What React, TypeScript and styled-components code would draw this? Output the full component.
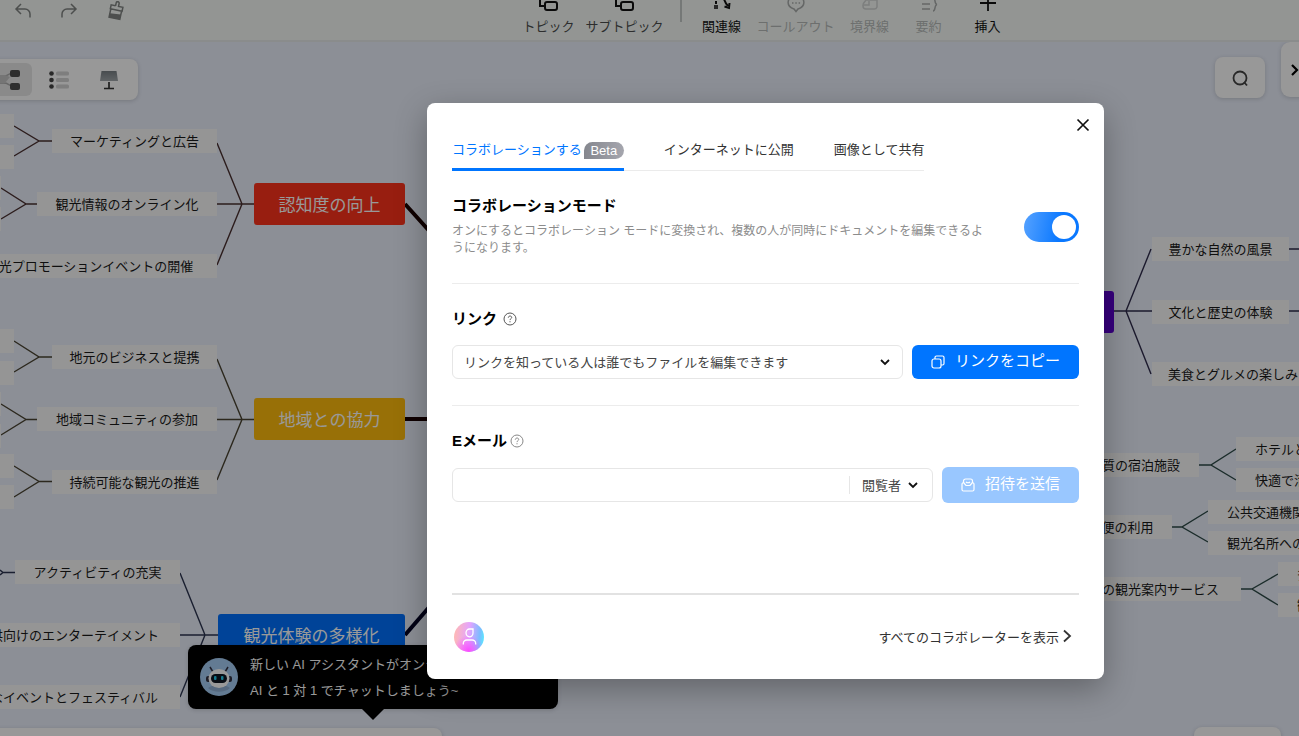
import React from "react";
import styled, { createGlobalStyle, css } from "styled-components";

const GlobalStyle = createGlobalStyle`
  * { box-sizing: border-box; }
  html, body, #root { height: 100%; }
  body {
    margin: 0;
    overflow: hidden;
    font-family: "Liberation Sans", "Noto Sans CJK JP", sans-serif;
    font-size: 13px;
    color: #1a1a1a;
  }
  button, input, select { font: inherit; color: inherit; margin: 0; }
  button { border: 0; padding: 0; background: none; cursor: pointer; }
`;

const Page = styled.div`
  position: relative;
  display: flex;
  flex-direction: column;
  height: 100%;
  min-height: 736px;
  overflow: hidden;
  background: #e9eefa;
`;

/* ---------- top toolbar ---------- */

const Header = styled.header`
  position: relative;
  z-index: 1;
  display: flex;
  align-items: flex-end;
  height: 42px;
  background: #f5f9f6;
  border-bottom: 2px solid #e6e9ea;
  overflow: hidden;
`;

const History = styled.div`
  display: flex;
  align-self: flex-start;
  gap: 26px;
  padding: 1px 0 0 13px;
`;

const IconButton = styled.button`
  display: flex;
  width: 20px;
  height: 20px;
  color: #808482;
`;

const Tools = styled.div`
  flex: 1;
  display: flex;
  justify-content: center;
  align-items: flex-end;
  gap: 11px;
  padding: 0 0 4px 110px;
`;

const Tool = styled.button<{ $tone?: "soft" | "off" }>`
  display: flex;
  flex-direction: column;
  align-items: center;
  gap: 2px;
  min-width: 48px;
  line-height: 18px;
  white-space: nowrap;
  color: ${(p) => (p.$tone === "off" ? "#b6b9b8" : p.$tone === "soft" ? "#4c4e4d" : "#111")};
  svg { color: ${(p) => (p.$tone === "off" ? "#a9acab" : "#111")}; }
`;

const ToolDivider = styled.span`
  width: 2px;
  height: 22px;
  margin: 0 5px 14px;
  background: #c4c8c6;
`;

/* ---------- mind map ---------- */

const Board = styled.main`
  position: absolute;
  inset: 0;
  overflow: hidden;
`;

const Wires = styled.svg`
  position: absolute;
  left: 0;
  top: 0;
  width: 1299px;
  height: 736px;
  fill: none;
`;

const Node = styled.div<{ $x: number; $y: number; $w: number; $start?: boolean }>`
  position: absolute;
  left: ${(p) => p.$x}px;
  top: ${(p) => p.$y}px;
  width: ${(p) => p.$w}px;
  height: 24px;
  line-height: 26px;
  white-space: nowrap;
  overflow: hidden;
  text-align: center;
  background: #f9f9f9;
  ${(p) => p.$start && css`text-align: left; padding-left: 19px;`}
`;

const Topic = styled(Node)<{ $color: string }>`
  height: 42px;
  line-height: 45px;
  border-radius: 3px;
  font-size: 17px;
  color: #fff;
  background: ${(p) => p.$color};
`;

/* ---------- panels floating over the map ---------- */

const panel = css`
  position: absolute;
  display: flex;
  align-items: center;
  background: #fdfdfd;
  box-shadow: 0 1px 4px rgba(0, 0, 0, 0.16);
`;

const ViewSwitch = styled.nav`
  ${panel}
  left: -20px;
  top: 59px;
  height: 41px;
  padding: 4px 6px;
  gap: 4px;
  border-radius: 8px;
`;

const ViewButton = styled.button<{ $active?: boolean }>`
  display: flex;
  align-items: center;
  justify-content: center;
  width: 46px;
  height: 33px;
  border-radius: 6px;
  background: ${(p) => (p.$active ? "#e6e6e6" : "transparent")};
`;

const SearchButton = styled.button`
  ${panel}
  right: 34px;
  top: 57px;
  width: 50px;
  height: 41px;
  justify-content: center;
  border-radius: 8px;
`;

const SideToggle = styled.button`
  ${panel}
  right: -10px;
  top: 42px;
  width: 28px;
  height: 55px;
  padding-left: 9px;
  border-radius: 9px;
`;

const StatusBar = styled.div`
  ${panel}
  left: -10px;
  top: 728px;
  width: 452px;
  height: 40px;
  border-radius: 8px;
`;

const ZoomBar = styled.div`
  ${panel}
  right: 18px;
  top: 727px;
  width: 87px;
  height: 40px;
  border-radius: 8px;
`;

const Hint = styled.aside`
  ${panel}
  left: 188px;
  top: 645px;
  width: 370px;
  height: 64px;
  gap: 12px;
  padding: 0 12px;
  border-radius: 8px;
  background: #000;
  color: #fff;
  line-height: 26px;
  white-space: nowrap;
  p { margin: 0; }
  &::after {
    content: "";
    position: absolute;
    left: 173px;
    top: 63px;
    border: 12px solid transparent;
    border-bottom-width: 0;
    border-top-color: #000;
  }
`;

const HintText = styled.div`
  padding-top: 2px;
`;

/* ---------- dialog ---------- */

const Backdrop = styled.div`
  position: absolute;
  inset: 0;
  z-index: 2;
  display: flex;
  justify-content: center;
  align-items: flex-start;
  padding: 103px 0 0 232px;
  background: rgba(0, 0, 0, 0.4);
`;

const Dialog = styled.section`
  position: relative;
  flex: 0 1 677px;
  padding: 37px 25px 27px;
  border-radius: 8px;
  background: #fff;
  box-shadow: 0 10px 32px rgba(0, 0, 0, 0.3);
`;

const Close = styled.button`
  position: absolute;
  top: 14px;
  right: 13px;
  display: flex;
  width: 16px;
  height: 16px;
`;

const Tabs = styled.div`
  display: inline-flex;
  gap: 40px;
  border-bottom: 1px solid #ebebeb;
  vertical-align: top;
`;

const Tab = styled.button<{ $active?: boolean }>`
  display: flex;
  align-items: center;
  gap: 2px;
  height: 31px;
  margin-bottom: -1px;
  padding-bottom: 8px;
  line-height: 20px;
  white-space: nowrap;
  border-bottom: 3px solid ${(p) => (p.$active ? "#0075ff" : "transparent")};
  color: ${(p) => (p.$active ? "#0075ff" : "#333")};
`;

const Badge = styled.span`
  width: 40px;
  height: 17px;
  line-height: 17px;
  text-align: center;
  border-radius: 9px 9px 9px 0;
  background: linear-gradient(90deg, #85878e, #a5a6ae);
  color: #fff;
`;

const Row = styled.div<{ $top?: number; $gap?: number; $align?: string }>`
  display: flex;
  align-items: ${(p) => p.$align ?? "center"};
  gap: ${(p) => p.$gap ?? 0}px;
  margin-top: ${(p) => p.$top ?? 0}px;
`;

const Heading = styled.h2`
  margin: 0;
  font-size: 15px;
  line-height: 20px;
  font-weight: 700;
  color: #000;
`;

const Grow = styled.div`
  flex: 1;
  min-width: 0;
`;

const Description = styled.p`
  margin: 7px 0 0;
  font-size: 12px;
  line-height: 17px;
  color: #8c8c8c;
`;

const Rule = styled.hr<{ $top: number; $strong?: boolean }>`
  height: ${(p) => (p.$strong ? 2 : 1)}px;
  margin: ${(p) => p.$top}px 0 0;
  border: 0;
  background: ${(p) => (p.$strong ? "#e2e2e2" : "#ececec")};
`;

const Switch = styled.input`
  appearance: none;
  flex: none;
  width: 55px;
  height: 30px;
  margin: 16px 0 0;
  padding: 3px;
  border-radius: 15px;
  background: linear-gradient(100deg, #56a2ff, #0a78ff 65%);
  &::after {
    content: "";
    display: block;
    width: 24px;
    height: 24px;
    margin-left: auto;
    border-radius: 50%;
    background: #fff;
  }
`;

const Field = styled.div`
  position: relative;
  flex: 1;
  min-width: 0;
  display: flex;
  align-items: center;
  height: 34px;
  border: 1px solid #e6e6e6;
  border-radius: 6px;
  background: #fff;
`;

const Select = styled.select`
  appearance: none;
  width: 100%;
  height: 32px;
  padding: 0 36px 0 11px;
  border: 0;
  background: transparent;
  color: #444;
`;

const RoleSelect = styled(Select)`
  width: 83px;
  height: 18px;
  padding: 0 0 0 12px;
  border-left: 1px solid #e6e6e6;
`;

const Chevron = styled.svg<{ $right: number }>`
  position: absolute;
  right: ${(p) => p.$right}px;
  width: 10px;
  height: 8px;
  pointer-events: none;
  fill: none;
  stroke: #111;
  stroke-width: 1.8;
`;

const EmailInput = styled.input`
  flex: 1;
  min-width: 0;
  height: 32px;
  padding: 0 11px;
  border: 0;
  outline: 0;
  background: transparent;
`;

const Action = styled.button<{ $width: number }>`
  display: flex;
  align-items: center;
  justify-content: center;
  gap: 10px;
  width: ${(p) => p.$width}px;
  height: 34px;
  border-radius: 6px;
  background: #0075ff;
  color: #fff;
  font-size: 15px;
  line-height: 20px;
  white-space: nowrap;
  span { padding-bottom: 2px; }
  &:disabled {
    height: 36px;
    background: #99c7ff;
  }
`;

const Footer = styled.footer`
  display: flex;
  align-items: center;
  justify-content: space-between;
  padding: 27px 7px 0 2px;
`;

const AllLink = styled.a`
  display: flex;
  align-items: center;
  gap: 3px;
  padding-bottom: 2px;
  color: #333;
  text-decoration: none;
`;

/* ---------- drawings ---------- */

const TopicIcon = () => (
  <svg width="20" height="20" viewBox="0 0 20 20" fill="none" stroke="currentColor" strokeWidth="2">
    <path d="M2 3v7h5" />
    <rect x="7" y="6" width="12" height="8" rx="2" />
  </svg>
);

const Help = ({ light }: { light?: boolean }) => (
  <svg width="14" height="14" viewBox="0 0 14 14" fill="none" stroke={light ? "#888" : "#555"} strokeWidth="1">
    <circle cx="7" cy="7" r="6" />
    <path d="M5.3 5.7c0-2.2 3.4-2.2 3.4-.2 0 1.2-1.7 1.2-1.7 2.6M7 9.2v1.1" />
  </svg>
);

const Robot = () => (
  <svg width="38" height="38" viewBox="0 0 38 38">
    <circle cx="19" cy="19" r="19" fill="#a6cdf5" />
    <path d="M13 14l-3-5M25 14l3-5" stroke="#334" strokeWidth="1.5" />
    <path d="M8 30c4-4 18-4 22 0-5 5-17 5-22 0z" fill="#8fb0d4" />
    <rect x="6" y="18" width="26" height="6" rx="2" fill="#334" />
    <ellipse cx="19" cy="20.500" rx="10.500" ry="9.500" fill="#fff" />
    <rect x="11" y="16" width="16" height="9" rx="4.500" fill="#0d1520" />
    <rect x="14" y="18" width="2.500" height="4" rx="1" fill="#25c9e8" />
    <rect x="21" y="18" width="2.500" height="4" rx="1" fill="#25c9e8" />
  </svg>
);

const Avatar = () => (
  <svg width="30" height="30" viewBox="0 0 30 30" fill="none">
    <defs>
      <linearGradient id="avatarBase" x1="0" y1="0.400" x2="1" y2="0.500">
        <stop offset="0" stopColor="#ffb9b4" />
        <stop offset="0.500" stopColor="#e3a3ff" />
        <stop offset="0.850" stopColor="#7cbcff" />
        <stop offset="1" stopColor="#5be6ff" />
      </linearGradient>
      <radialGradient id="avatarGlow" cx="0.480" cy="0.950" r="0.500">
        <stop offset="0" stopColor="#fb4dff" />
        <stop offset="1" stopColor="#fb4dff" stopOpacity="0" />
      </radialGradient>
    </defs>
    <circle cx="15" cy="15" r="15" fill="url(#avatarBase)" />
    <circle cx="15" cy="15" r="15" fill="url(#avatarGlow)" />
    <path d="M19 7v4a3.500 3.900 0 1 1-3.500-4zM9.300 22.500v-1a3.500 3.500 0 0 1 3.500-3.500h5.400a3.500 3.500 0 0 1 3.500 3.500v1" stroke="#fff" strokeWidth="1.300" />
  </svg>
);

/* ---------- data ---------- */

const blanks = [
  [114, 14], [145, 14], [176, 1], [207, 1],
  [329, 14], [361, 14], [392, 1], [424, 1], [454, 14], [485, 14],
];

const nodes: { x: number; y: number; w: number; text: string; start?: boolean }[] = [
  { x: 52, y: 129, w: 165, text: "マーケティングと広告" },
  { x: 37, y: 192, w: 180, text: "観光情報のオンライン化" },
  { x: -38, y: 254, w: 255, text: "観光プロモーションイベントの開催" },
  { x: 52, y: 345, w: 165, text: "地元のビジネスと提携" },
  { x: 37, y: 407, w: 180, text: "地域コミュニティの参加" },
  { x: 52, y: 470, w: 165, text: "持続可能な観光の推進" },
  { x: 15, y: 560, w: 165, text: "アクティビティの充実" },
  { x: -44, y: 623, w: 224, text: "子供向けのエンターテイメント" },
  { x: -58, y: 685, w: 238, text: "特別なイベントとフェスティバル" },
  { x: 1152, y: 237, w: 137, text: "豊かな自然の風景" },
  { x: 1152, y: 300, w: 137, text: "文化と歴史の体験" },
  { x: 1152, y: 362, w: 162, text: "美食とグルメの楽しみ" },
  { x: 1070, y: 453, w: 129, text: "上質の宿泊施設" },
  { x: 1044, y: 515, w: 128, text: "交通の便の利用" },
  { x: 1054, y: 577, w: 187, text: "日本の観光案内サービス" },
  { x: 1236, y: 437, w: 160, text: "ホテルと旅館", start: true },
  { x: 1236, y: 468, w: 160, text: "快適で清潔な客室", start: true },
  { x: 1208, y: 500, w: 160, text: "公共交通機関の利用", start: true },
  { x: 1208, y: 531, w: 160, text: "観光名所へのアクセス", start: true },
  { x: 1278, y: 562, w: 160, text: "多言語対応", start: true },
  { x: 1278, y: 593, w: 160, text: "観光案内所", start: true },
];

const wires: [string, string][] = [
  ["#4a3030", "M14 126L39 141L14 156M39 141H52M1 188L26 204L1 219M26 204H37M217 143L242 204L217 265M217 204H254"],
  ["#4a4432", "M14 341L39 357L14 372M39 357H52M1 404L26 419.500L1 435M26 419.500H37M14 466L39 481.500L14 497M39 481.500H52M217 359L242 419.500L217 480M217 419.500H254"],
  ["#2c3450", "M0 570L3 572.500L0 575M3 572.500H15M180 573L205 635L180 697M180 635H218"],
  ["#2f2c4c", "M1114 311H1152M1151 249L1126 311L1151 374M1289 249H1299M1289 311H1299"],
  ["#2d4a47", "M1199 465H1211M1236 449L1211 465L1236 480M1172 527H1182M1208 511L1182 527L1208 542M1241 589H1252M1278 574L1252 589L1278 605"],
];

export default function App() {
  return (
    <Page>
      <GlobalStyle />
      <Header>
        <History>
          <IconButton aria-label="元に戻す">
            <svg width="20" height="20" viewBox="0 0 20 20" fill="none" stroke="currentColor" strokeWidth="1.500">
              <path d="M8 3L3 8l5 5M3 8h9a5 5 0 0 1 5 5v3.500" />
            </svg>
          </IconButton>
          <IconButton aria-label="やり直し">
            <svg width="20" height="20" viewBox="0 0 20 20" fill="none" stroke="currentColor" strokeWidth="1.500">
              <path d="M12 3l5 5-5 5M17 8H8a5 5 0 0 0-5 5v3.500" />
            </svg>
          </IconButton>
          <IconButton aria-label="書式のコピー">
            <svg width="20" height="20" viewBox="0 0 20 20" fill="none" stroke="currentColor" strokeWidth="1.500">
              <g transform="rotate(12 11 10)">
                <path d="M9.500 5V2a1.500 1.500 0 0 1 3 0v3H17v4H5V5h4.500M5.500 9v8.500h11V9" />
                <path d="M5.500 13.500l11-1v5h-11z" fill="currentColor" stroke="none" />
              </g>
            </svg>
          </IconButton>
        </History>
        <Tools>
          <Tool $tone="soft"><TopicIcon />トピック</Tool>
          <Tool $tone="soft"><TopicIcon />サブトピック</Tool>
          <ToolDivider />
          <Tool>
            <svg width="20" height="20" viewBox="0 0 20 20" fill="none" stroke="currentColor" strokeWidth="2">
              <path d="M4 5v3M12 3c1 3 2 5 4 7M12.500 10.500l4.500 1.500.5-5" />
              <rect x="2" y="9" width="4" height="4" fill="#444" stroke="none" />
            </svg>
            関連線
          </Tool>
          <Tool $tone="off">
            <svg width="20" height="20" viewBox="0 0 20 20" fill="none" stroke="currentColor" strokeWidth="1.500">
              <path d="M10 15.500l-2-2.500C-1 10 1 0 10 0s11 10 2 13z" />
              <path d="M6 7h1.500M9.300 7h1.500M12.600 7h1.500" />
            </svg>
            コールアウト
          </Tool>
          <Tool $tone="off">
            <svg width="20" height="20" viewBox="0 0 20 20" fill="none" stroke="#d0d3d2" strokeWidth="1.500">
              <path d="M3 8l3-4h11v7a3 3 0 0 1-3 2H6a3 3 0 0 1-3-3V9h6V5" />
            </svg>
            境界線
          </Tool>
          <Tool $tone="off">
            <svg width="20" height="20" viewBox="0 0 20 20" fill="none" stroke="currentColor" strokeWidth="1.500">
              <path d="M3 8h8M3 13h8M14 2c3 0 1 6 4 6.500-3 .5-1 6.500-4 6.500" />
            </svg>
            要約
          </Tool>
          <Tool>
            <svg width="20" height="20" viewBox="0 0 20 20" fill="none" stroke="currentColor" strokeWidth="1.800">
              <path d="M2 7h16M10 0v15" />
            </svg>
            挿入
          </Tool>
        </Tools>
      </Header>

      <Board>
        <Wires viewBox="0 0 1299 736">
          {wires.map(([color, d]) => (
            <path key={color} d={d} stroke={color} strokeWidth="1.400" />
          ))}
          <path d="M405 204L450 254M405 419H450" stroke="#1a0000" strokeWidth="4" />
          <path d="M405 635L450 583" stroke="#000022" strokeWidth="4" />
        </Wires>
        {blanks.map(([y, w]) => (
          <Node key={y} $x={0} $y={y} $w={w} />
        ))}
        {nodes.map((n) => (
          <Node key={n.text} $x={n.x} $y={n.y} $w={n.w} $start={n.start}>{n.text}</Node>
        ))}
        <Topic $x={254} $y={183} $w={151} $color="#fd321b">認知度の向上</Topic>
        <Topic $x={254} $y={398} $w={151} $color="#fdbb0d">地域との協力</Topic>
        <Topic $x={218} $y={614} $w={187} $color="#0071fd">観光体験の多様化</Topic>
        <Topic $x={954} $y={291} $w={160} $color="#5c00d2">観光資源</Topic>

        <ViewSwitch aria-label="表示">
          <ViewButton $active aria-label="マインドマップ">
            <svg width="46" height="20" viewBox="0 0 46 20">
              <path d="M4 6h14c4 0 4-2 8-3M4 13h14c4 0 4 2 8 3" stroke="#aaa" strokeWidth="1.500" fill="none" />
              <path d="M2 5h17l5 2-5 6H2z" fill="#c4c4c4" />
              <rect x="24" y="0" width="10" height="7" rx="2" fill="#4d4d4d" />
              <rect x="24" y="13" width="10" height="7" rx="2" fill="#4d4d4d" />
            </svg>
          </ViewButton>
          <ViewButton aria-label="アウトライン">
            <svg width="20" height="18" viewBox="0 0 20 18">
              <g fill="#444"><circle cx="2.500" cy="2.500" r="2.300" /><circle cx="2.500" cy="9" r="2.300" /><circle cx="2.500" cy="15.500" r="2.300" /></g>
              <g fill="#d2d2d2"><rect x="7" y="0.500" width="13" height="4" rx="1.500" /><rect x="7" y="7" width="13" height="4" rx="1.500" /><rect x="7" y="13.500" width="13" height="4" rx="1.500" /></g>
            </svg>
          </ViewButton>
          <ViewButton aria-label="スライド">
            <svg width="20" height="20" viewBox="0 0 20 20">
              <defs>
                <linearGradient id="board" x1="0" y1="0" x2="0" y2="1">
                  <stop offset="0" stopColor="#787f84" /><stop offset="1" stopColor="#a0a6aa" />
                </linearGradient>
              </defs>
              <path d="M2.500 1h15l1.500 10H1z" fill="url(#board)" />
              <path d="M10 12v6M5 18.500h10" stroke="#333" strokeWidth="1.700" />
            </svg>
          </ViewButton>
        </ViewSwitch>

        <SearchButton aria-label="検索">
          <svg width="18" height="18" viewBox="0 0 18 18" fill="none" stroke="#444" strokeWidth="1.800">
            <circle cx="9" cy="9" r="6.500" /><path d="M13 13l3 3.500" />
          </svg>
        </SearchButton>
        <SideToggle aria-label="パネルを開く">
          <svg width="10" height="12" viewBox="0 0 10 12" fill="none" stroke="#000" strokeWidth="2.200">
            <path d="M2 1l5 5-5 5" />
          </svg>
        </SideToggle>
        <StatusBar />
        <ZoomBar />
        <Hint>
          <Robot />
          <HintText>
            <p>新しい AI アシスタントがオンライン</p>
            <p>AI と 1 対 1 でチャットしましょう~</p>
          </HintText>
        </Hint>
      </Board>

      <Backdrop>
        <Dialog role="dialog" aria-modal="true" aria-label="共有">
          <Close aria-label="閉じる">
            <svg width="16" height="16" viewBox="0 0 16 16" stroke="#111" strokeWidth="1.700">
              <path d="M2.500 2.500l11 11M13.500 2.500l-11 11" />
            </svg>
          </Close>

          <Tabs role="tablist">
            <Tab role="tab" aria-selected="true" $active>コラボレーションする<Badge>Beta</Badge></Tab>
            <Tab role="tab" aria-selected="false">インターネットに公開</Tab>
            <Tab role="tab" aria-selected="false">画像として共有</Tab>
          </Tabs>

          <Row $top={25} $align="flex-start">
            <Grow>
              <Heading as="label" htmlFor="collab-mode">コラボレーションモード</Heading>
              <Description>
                オンにするとコラボレーション モードに変換され、複数の人が同時にドキュメントを編集できるよ
                <br />
                うになります。
              </Description>
            </Grow>
            <Switch id="collab-mode" type="checkbox" role="switch" defaultChecked />
          </Row>

          <Rule $top={26} />

          <Row $top={25} $gap={6}>
            <Heading as="label" htmlFor="link-scope">リンク</Heading>
            <Help />
          </Row>
          <Row $top={16} $gap={9}>
            <Field>
              <Select id="link-scope">
                <option>リンクを知っている人は誰でもファイルを編集できます</option>
              </Select>
              <Chevron $right={12} viewBox="0 0 10 8"><path d="M1 2l4 4 4-4" /></Chevron>
            </Field>
            <Action $width={167}>
              <svg width="14" height="14" viewBox="0 0 14 14" fill="none" stroke="currentColor" strokeWidth="1.200">
                <rect x="1" y="4" width="9" height="9" rx="2" />
                <path d="M4 4V2.500A1.500 1.500 0 0 1 5.500 1h6A1.500 1.500 0 0 1 13 2.500v6a1.500 1.500 0 0 1-1.500 1.500H10" />
              </svg>
              <span>リンクをコピー</span>
            </Action>
          </Row>

          <Rule $top={26} />

          <Row $top={25} $gap={3}>
            <Heading as="label" htmlFor="invite-email">Eメール</Heading>
            <Help light />
          </Row>
          <Row $top={16} $gap={9}>
            <Field>
              <EmailInput id="invite-email" type="email" />
              <RoleSelect aria-label="権限">
                <option>閲覧者</option>
              </RoleSelect>
              <Chevron $right={14} viewBox="0 0 10 8"><path d="M1 2l4 4 4-4" /></Chevron>
            </Field>
            <Action $width={137} disabled>
              <svg width="14" height="14" viewBox="0 0 14 14" fill="none" stroke="currentColor" strokeWidth="1.200">
                <path d="M2.500 5V3a2 2 0 0 1 2-2h5a2 2 0 0 1 2 2v2" />
                <path d="M1 6a2 2 0 0 1 1.500-1.500L5 7.500h4l2.500-3A2 2 0 0 1 13 6v5.500a1.500 1.500 0 0 1-1.500 1.500h-9A1.500 1.500 0 0 1 1 11.500z" />
                <path d="M5 4c1 1 3 1 4 0" />
              </svg>
              <span>招待を送信</span>
            </Action>
          </Row>

          <Rule $top={90} $strong />

          <Footer>
            <Avatar />
            <AllLink href="#collaborators">
              すべてのコラボレーターを表示
              <svg width="10" height="14" viewBox="0 0 10 14" fill="none" stroke="currentColor" strokeWidth="1.800">
                <path d="M2 1.500l6 5.500-6 5.500" />
              </svg>
            </AllLink>
          </Footer>
        </Dialog>
      </Backdrop>
    </Page>
  );
}
